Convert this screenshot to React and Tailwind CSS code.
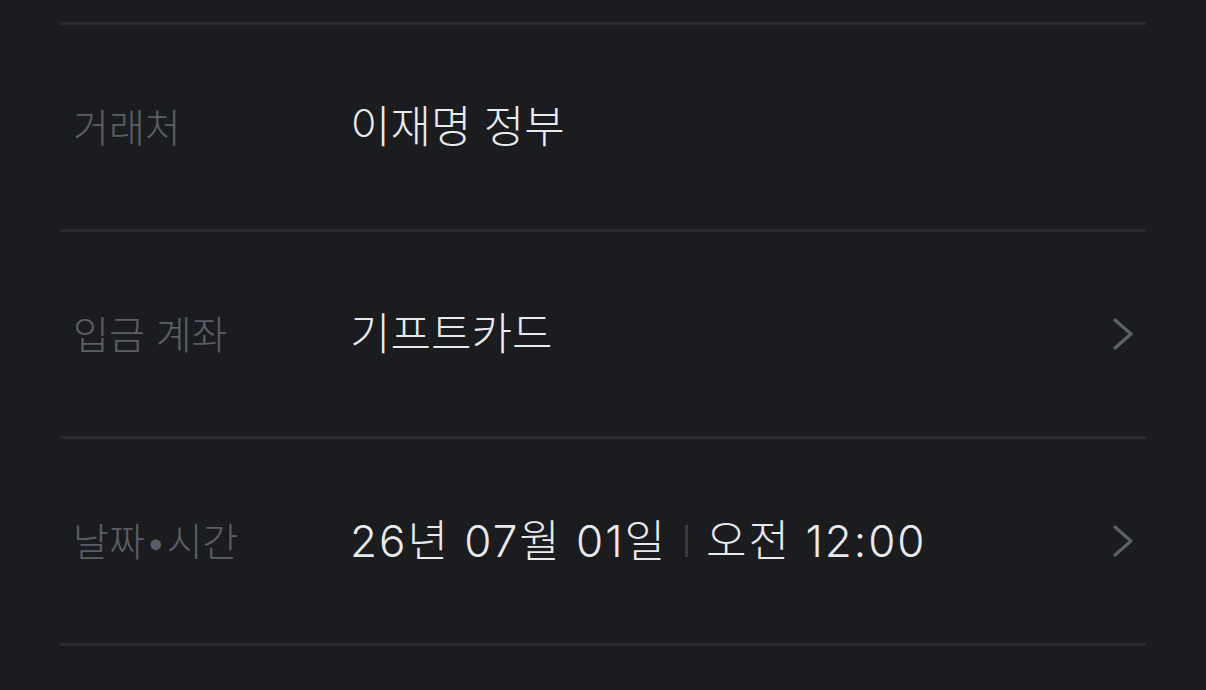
const rows = [
  { label: "거래처", value: "이재명 정부" },
  { label: "입금 계좌", value: "기프트카드", arrow: true },
  { label: "날짜•시간", date: ["26년 07월 01일", "오전 12:00"], arrow: true },
];

const font = { fontFamily: 'Inter, "Noto Sans CJK KR", "Noto Sans", sans-serif' };

const Chevron = () => (
  <svg width="24" height="34" viewBox="0 0 24 34" fill="none" className="text-[#5d6068]">
    <path d="M4 3 L20 17 L4 31" stroke="currentColor" strokeWidth="3.2" strokeLinecap="round" strokeLinejoin="round" />
  </svg>
);

const Row = ({ row }) => (
  <div className="h-[207px] border-t-[3px] border-[#2a2b30] flex items-center pl-[13px] pr-[11px]">
    <div className="w-[277px] text-[39px] font-light text-[#5b5e66] leading-none">
      {row.label}
    </div>
    <div className="flex-1 text-[44px] font-light text-[#e9eaee] leading-none flex items-center">
      {row.date ? (
        <>
          <span className="tracking-[2px]">{row.date[0]}</span>
          <span className="mx-[18px] w-[3px] h-[32px] bg-[#3a3b41] inline-block"></span>
          <span className="tracking-[2px]">{row.date[1]}</span>
        </>
      ) : (
        row.value
      )}
    </div>
    {row.arrow && <Chevron />}
  </div>
);

const App = () => {
  return (
    <div className="w-[1206px] h-[690px] bg-[#1b1c20] overflow-hidden" style={font}>
      <div className="pt-[22px] px-[60px]">
        {rows.map((row) => (
          <Row key={row.label} row={row} />
        ))}
        <div className="border-t-[3px] border-[#2a2b30]"></div>
      </div>
    </div>
  );
};

export default App;
